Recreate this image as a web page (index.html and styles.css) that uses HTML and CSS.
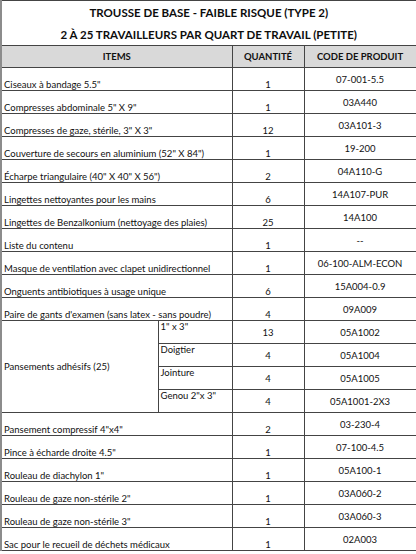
FILE: index.html
```html
<!DOCTYPE html>
<html lang="fr">
<head>
<meta charset="utf-8">
<title>Trousse de base - faible risque (type 2)</title>
<link rel="stylesheet" href="styles.css">
</head>
<body>
<table class="kit">
  <colgroup>
    <col class="c-main">
    <col class="c-sub">
    <col class="c-qty">
    <col class="c-code">
  </colgroup>
  <thead>
    <tr class="title t1"><th colspan="4">TROUSSE DE BASE - FAIBLE RISQUE (TYPE 2)</th></tr>
    <tr class="title t2"><th colspan="4">2 À 25 TRAVAILLEURS PAR QUART DE TRAVAIL (PETITE)</th></tr>
    <tr class="head"><th colspan="2">ITEMS</th><th>QUANTITÉ</th><th>CODE DE PRODUIT</th></tr>
  </thead>
  <tbody>
    <tr><td colspan="2" class="item">Ciseaux à bandage 5.5"</td><td class="qty">1</td><td class="code">07-001-5.5</td></tr>
    <tr><td colspan="2" class="item">Compresses abdominale 5" X 9"</td><td class="qty">1</td><td class="code">03A440</td></tr>
    <tr><td colspan="2" class="item">Compresses de gaze, stérile, 3" X 3"</td><td class="qty">12</td><td class="code">03A101-3</td></tr>
    <tr><td colspan="2" class="item">Couverture de secours en aluminium (52" X 84")</td><td class="qty">1</td><td class="code">19-200</td></tr>
    <tr><td colspan="2" class="item">Écharpe triangulaire (40" X 40" X 56")</td><td class="qty">2</td><td class="code">04A110-G</td></tr>
    <tr><td colspan="2" class="item">Lingettes nettoyantes pour les mains</td><td class="qty">6</td><td class="code">14A107-PUR</td></tr>
    <tr><td colspan="2" class="item">Lingettes de Benzalkonium (nettoyage des plaies)</td><td class="qty">25</td><td class="code">14A100</td></tr>
    <tr><td colspan="2" class="item">Liste du contenu</td><td class="qty">1</td><td class="code">--</td></tr>
    <tr><td colspan="2" class="item">Masque de ventilation avec clapet unidirectionnel</td><td class="qty">1</td><td class="code">06-100-ALM-ECON</td></tr>
    <tr><td colspan="2" class="item">Onguents antibiotiques à usage unique</td><td class="qty">6</td><td class="code">15A004-0.9</td></tr>
    <tr><td colspan="2" class="item">Paire de gants d'examen (sans latex - sans poudre)</td><td class="qty">4</td><td class="code">09A009</td></tr>
    <tr><td rowspan="4" class="group">Pansements adhésifs (25)</td><td class="sub">1" x 3"</td><td class="qty mid">13</td><td class="code">05A1002</td></tr>
    <tr><td class="sub">Doigtier</td><td class="qty mid">4</td><td class="code">05A1004</td></tr>
    <tr><td class="sub">Jointure</td><td class="qty mid">4</td><td class="code">05A1005</td></tr>
    <tr><td class="sub">Genou 2"x 3"</td><td class="qty mid">4</td><td class="code">05A1001-2X3</td></tr>
    <tr><td colspan="2" class="item">Pansement compressif 4"x4"</td><td class="qty">2</td><td class="code">03-230-4</td></tr>
    <tr><td colspan="2" class="item">Pince à écharde droite 4.5"</td><td class="qty">1</td><td class="code">07-100-4.5</td></tr>
    <tr><td colspan="2" class="item">Rouleau de diachylon 1"</td><td class="qty">1</td><td class="code">05A100-1</td></tr>
    <tr><td colspan="2" class="item">Rouleau de gaze non-stérile 2"</td><td class="qty">1</td><td class="code">03A060-2</td></tr>
    <tr><td colspan="2" class="item">Rouleau de gaze non-stérile 3"</td><td class="qty">1</td><td class="code">03A060-3</td></tr>
    <tr><td colspan="2" class="item">Sac pour le recueil de déchets médicaux</td><td class="qty">1</td><td class="code">02A003</td></tr>
  </tbody>
</table>
</body>
</html>
```

FILE: styles.css
```css
html, body {
  margin: 0;
  padding: 0;
  background: #ffffff;
}

.kit {
  border-collapse: collapse;
  table-layout: fixed;
  width: 415px;
  font-family: Lato, "Liberation Sans", sans-serif;
  font-size: 9.5px;
  color: #111111;
  border-left: 2px solid #8c8c8c;
}

.c-main { width: 157px; }
.c-sub { width: 74px; }
.c-qty { width: 72px; }
.c-code { width: 112px; }

.kit td, .kit th {
  padding: 0 2px;
  overflow: hidden;
  white-space: nowrap;
  line-height: 11px;
}

.title th {
  font-size: 11.5px;
  font-weight: 700;
  text-align: center;
  border-right: 1px solid #444444;
  color: #0d0d0d;
}

.t1 th {
  height: 22px;
  vertical-align: middle;
  border-top: 1px solid #444444;
}

.t2 th {
  height: 22px;
  vertical-align: middle;
}

.head th {
  height: 21px;
  background: #d9d9d9;
  font-weight: 700;
  font-size: 9.5px;
  text-align: center;
  vertical-align: middle;
  border: 1px solid #444444;
  border-left-width: 0;
}

.head th:first-child {
  border-left: 2px solid #8c8c8c;
}

.kit tbody td {
  height: 22px;
  border: 1px solid #444444;
}

.kit tbody td.item,
.kit tbody td.group {
  border-left: 2px solid #8c8c8c;
}

.item {
  text-align: left;
  vertical-align: bottom;
  padding-bottom: 2px;
}

.qty {
  text-align: center;
  vertical-align: bottom;
  padding-bottom: 1px;
}

.qty.mid {
  vertical-align: middle;
  padding-bottom: 0;
}

.code {
  text-align: center;
  vertical-align: middle;
}

.group {
  text-align: left;
  vertical-align: middle;
}

.sub {
  text-align: left;
  vertical-align: top;
  padding-top: 1px;
}
```
